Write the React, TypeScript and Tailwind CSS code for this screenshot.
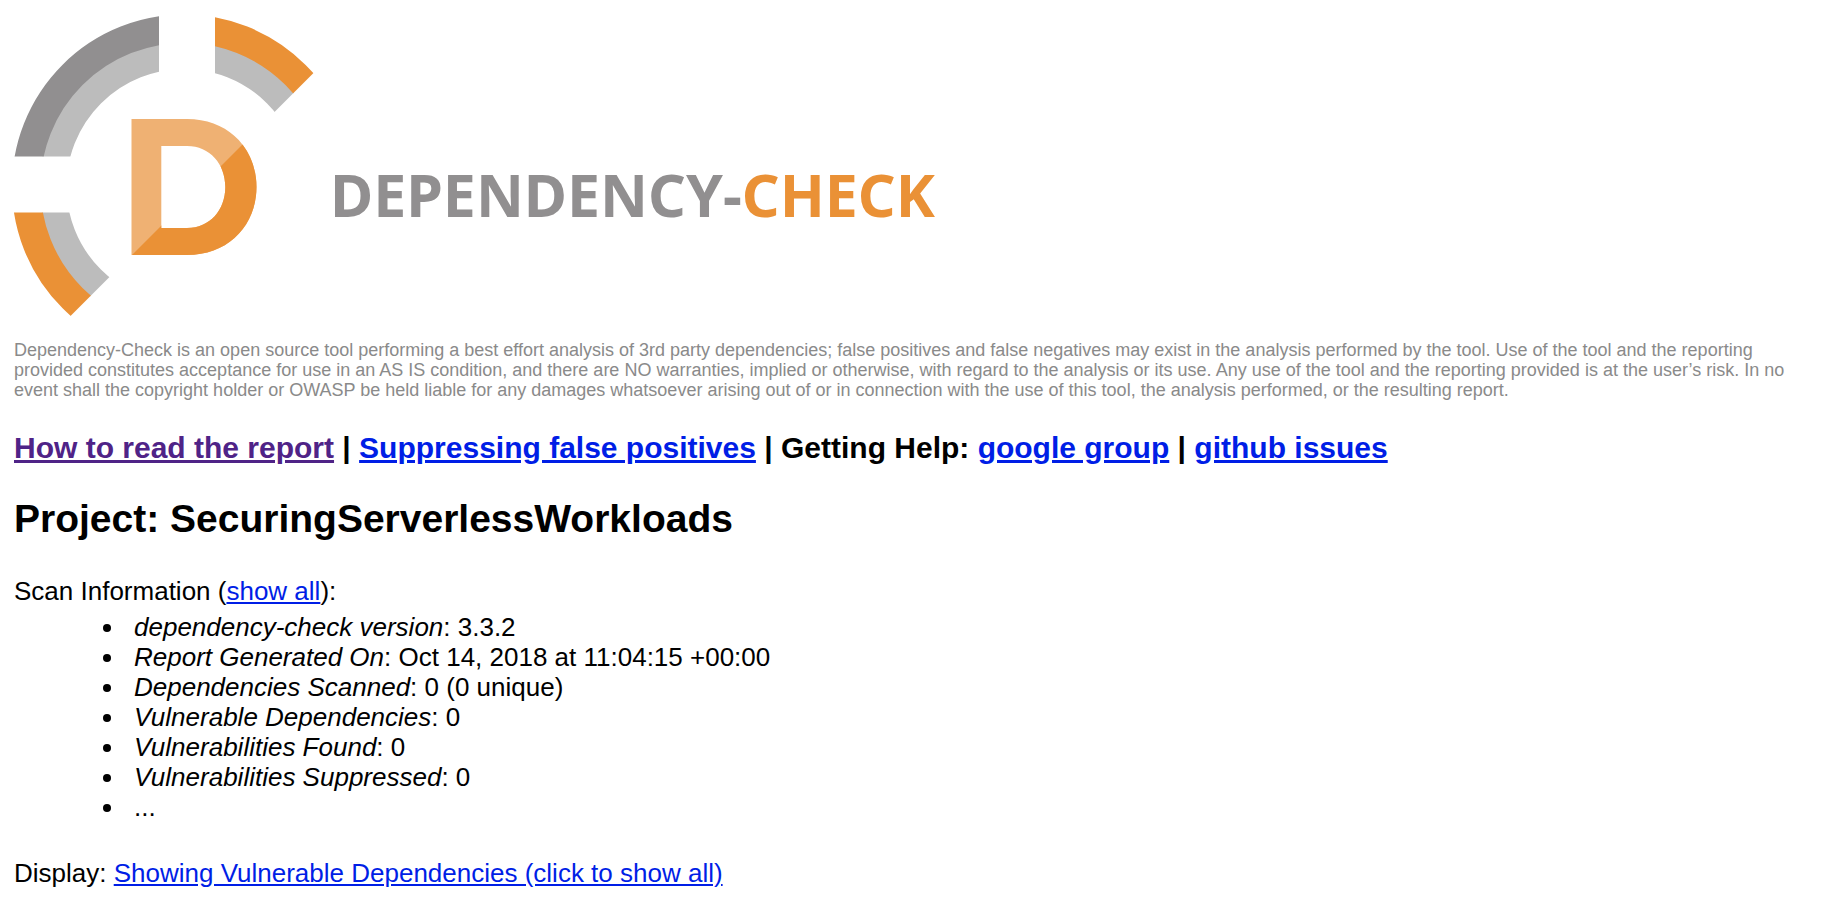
import type { ReactNode } from "react";

const scanInfo = [
  { label: "dependency-check version", value: "3.3.2" },
  { label: "Report Generated On", value: "Oct 14, 2018 at 11:04:15 +00:00" },
  { label: "Dependencies Scanned", value: "0 (0 unique)" },
  { label: "Vulnerable Dependencies", value: "0" },
  { label: "Vulnerabilities Found", value: "0" },
  { label: "Vulnerabilities Suppressed", value: "0" },
];

function Link({ children, visited = false }: { children: ReactNode; visited?: boolean }) {
  return (
    <a href="#" className={visited ? "text-[#4f2387] underline" : "text-[#001ee6] underline"}>
      {children}
    </a>
  );
}

function Emblem() {
  return (
    <svg viewBox="14 16 300 300" className="size-[300px] shrink-0" aria-hidden="true">
      <defs>
        <clipPath id="top-left">
          <path d="M0 0H159V156.5H0Z" />
        </clipPath>
        <clipPath id="top-right">
          <path d="M215 0H386.5L215 171.5Z" />
        </clipPath>
        <clipPath id="bottom-left">
          <path d="M0 212.5H174L0 386.5Z" />
        </clipPath>
        <clipPath id="lower-d">
          <path d="M132 255L262 125V260H127Z" />
        </clipPath>
      </defs>
      <g fill="none">
        <g clipPath="url(#top-left)">
          <circle cx="184" cy="186.5" r="131" stroke="#bcbcbc" strokeWidth="27" />
          <circle cx="184" cy="186.5" r="157.75" stroke="#918f90" strokeWidth="28.5" />
        </g>
        <g clipPath="url(#top-right)">
          <circle cx="184" cy="186.5" r="131" stroke="#bcbcbc" strokeWidth="27" />
          <circle cx="184" cy="186.5" r="157.75" stroke="#ea9136" strokeWidth="28.5" />
        </g>
        <g clipPath="url(#bottom-left)">
          <circle cx="184" cy="186.5" r="131" stroke="#bcbcbc" strokeWidth="27" />
          <circle cx="184" cy="186.5" r="157.75" stroke="#ea9136" strokeWidth="28.5" />
        </g>
      </g>
      <g fillRule="evenodd">
        <path
          fill="#efb173"
          d="M131.5 119H187C229 119 256.5 149 256.5 187S229 255 187 255H131.5ZM161.3 146V228H187C210 228 225.3 210 225.3 187S210 146 187 146Z"
        />
        <path
          fill="#ea9136"
          clipPath="url(#lower-d)"
          d="M131.5 119H187C229 119 256.5 149 256.5 187S229 255 187 255H131.5ZM161.3 146V228H187C210 228 225.3 210 225.3 187S210 146 187 146Z"
        />
      </g>
    </svg>
  );
}

export default function App() {
  return (
    <main className="bg-white px-3.5 pt-4 pb-5 font-['Liberation_Sans',Arial,sans-serif] text-[26px] leading-[30px] text-black">
      <header className="flex items-center gap-4">
        <Emblem />
        <div className="pt-14 font-['Noto_Sans',sans-serif] text-[59px] leading-[64px] font-bold whitespace-nowrap text-[#918f90]">
          DEPENDENCY-<span className="text-[#ea9136]">CHECK</span>
        </div>
      </header>

      <p className="mt-6 text-[18px] leading-5 text-[#8a8a8a]">
        Dependency-Check is an open source tool performing a best effort analysis of 3rd party dependencies; false
        positives and false negatives may exist in the analysis performed by the tool. Use of the tool and the
        reporting provided constitutes acceptance for use in an AS IS condition, and there are NO warranties, implied
        or otherwise, with regard to the analysis or its use. Any use of the tool and the reporting provided is at the
        user’s risk. In no event shall the copyright holder or OWASP be held liable for any damages whatsoever arising
        out of or in connection with the use of this tool, the analysis performed, or the resulting report.
      </p>

      <h3 className="mt-8 text-[30px] leading-8 font-bold">
        <Link visited>How to read the report</Link> | <Link>Suppressing false positives</Link> | Getting Help:{" "}
        <Link>google group</Link> | <Link>github issues</Link>
      </h3>

      <h2 className="mt-8 text-[39px] leading-[46px] font-bold">Project: SecuringServerlessWorkloads</h2>

      <section className="mt-[34px]">
        <p>
          Scan Information (<Link>show all</Link>):
        </p>
        <ul className="mt-1.5 list-disc pl-28">
          {scanInfo.map(({ label, value }) => (
            <li key={label} className="pl-2">
              <i>{label}</i>: {value}
            </li>
          ))}
          <li className="pl-2">...</li>
        </ul>
      </section>

      <p className="mt-9">
        Display: <Link>Showing Vulnerable Dependencies (click to show all)</Link>
      </p>
    </main>
  );
}
